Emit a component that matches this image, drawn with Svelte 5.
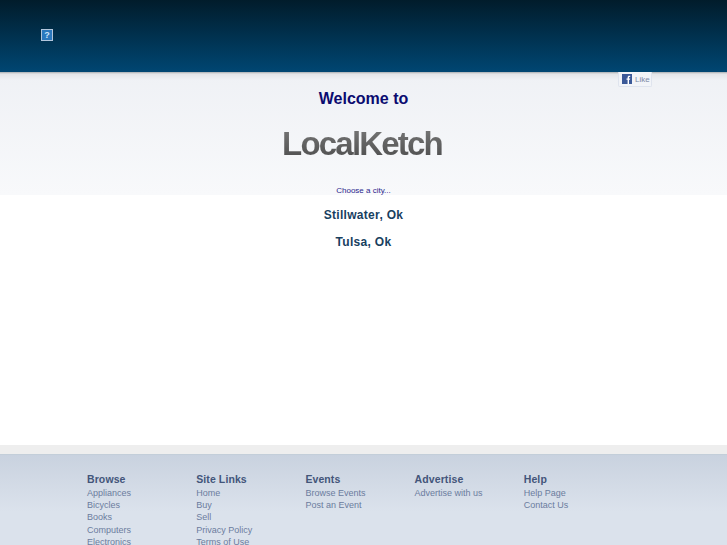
<script>
  const cities = ['Stillwater, Ok', 'Tulsa, Ok'];

  const columns = [
    { title: 'Browse', links: ['Appliances', 'Bicycles', 'Books', 'Computers', 'Electronics'] },
    { title: 'Site Links', links: ['Home', 'Buy', 'Sell', 'Privacy Policy', 'Terms of Use'] },
    { title: 'Events', links: ['Browse Events', 'Post an Event'] },
    { title: 'Advertise', links: ['Advertise with us'] },
    { title: 'Help', links: ['Help Page', 'Contact Us'] },
  ];
</script>

<div class="page">
  <header>
    <div class="missing" aria-label="logo">
      <span>?</span>
    </div>
  </header>

  <section class="welcome">
    <div class="like">
      <svg width="10" height="10" viewBox="0 0 10 10">
        <rect width="10" height="10" fill="#3b5998" />
        <path d="M5.6 10V5.8H4.5V4.4h1.1V3.4c0-1.1.6-1.7 1.7-1.7h.9v1.4h-.6c-.4 0-.6.2-.6.5v.8h1.2l-.2 1.4h-1V10z" fill="#fff" />
      </svg>
      <span>Like</span>
    </div>
    <h1>Welcome to</h1>
    <div class="logo">LocalKetch</div>
    <p>Choose a city...</p>
  </section>

  <main>
    {#each cities as city}
      <a href="#top">{city}</a>
    {/each}
  </main>

  <div class="band"></div>

  <footer>
    {#each columns as col}
      <div class="col">
        <h3>{col.title}</h3>
        {#each col.links as link}
          <a href="#top">{link}</a>
        {/each}
      </div>
    {/each}
  </footer>
</div>

<style>
  :global(body) {
    margin: 0;
    font-family: "Liberation Sans", Arial, sans-serif;
    background: #fff;
  }
  .page {
    height: 100vh;
    overflow: hidden;
    display: flex;
    flex-direction: column;
  }
  header {
    height: 72px;
    flex: none;
    background: linear-gradient(#011c2b, #004672);
    display: flex;
    align-items: center;
    padding: 0 0 2px 41px;
    box-sizing: border-box;
  }
  .missing {
    width: 12px;
    height: 12px;
    box-sizing: border-box;
    border: 1px solid #b3c6dc;
    background: #2b78bd;
    color: #cfe6fa;
    font-size: 9px;
    line-height: 10px;
    text-align: center;
    font-weight: bold;
  }
  .welcome {
    height: 123px;
    flex: none;
    box-sizing: border-box;
    background:
      linear-gradient(#a9adb0, #e3e5e8 2px, #eff1f5 8px, rgba(239, 241, 245, 0) 9px),
      linear-gradient(#eff1f5, #f8f9fb);
    text-align: center;
    position: relative;
    padding-top: 17px;
  }
  .like {
    position: absolute;
    top: 0;
    left: 618px;
    width: 34px;
    height: 15px;
    box-sizing: border-box;
    background: #f2f4f8;
    border: 1px solid #dfe4ee;
    border-top: none;
    border-radius: 0 0 2px 2px;
    display: flex;
    align-items: center;
    gap: 3px;
    padding-left: 3px;
    font-size: 8px;
    color: #7a87a6;
  }
  h1 {
    margin: 0;
    font-size: 16px;
    line-height: 20px;
    font-weight: bold;
    color: #0b0b70;
  }
  .logo {
    margin-top: 16px;
    padding-right: 3px;
    font-size: 33px;
    line-height: 38px;
    font-weight: bold;
    letter-spacing: -1.8px;
    background: linear-gradient(#7a7a7a, #4a4a4a);
    -webkit-background-clip: text;
    background-clip: text;
    color: transparent;
  }
  p {
    margin: 22px 0 0;
    font-size: 8px;
    line-height: 12px;
    color: #2b1e8c;
  }
  main {
    height: 250px;
    flex: none;
    padding-top: 12px;
    box-sizing: border-box;
    display: flex;
    flex-direction: column;
    align-items: center;
    gap: 11px;
  }
  main a {
    font-size: 12px;
    line-height: 16px;
    font-weight: bold;
    letter-spacing: 0.3px;
    color: #17405f;
    text-decoration: none;
  }
  .band {
    height: 9px;
    flex: none;
    background: #eeeeee;
  }
  footer {
    flex: 1;
    display: flex;
    padding: 17px 0 0 87px;
    background: linear-gradient(#c9d2df, #dbe2ec 60%);
    border-top: 1px solid #c3ced9;
  }
  .col {
    width: 109.2px;
    flex: none;
    display: flex;
    flex-direction: column;
  }
  h3 {
    margin: 0;
    font-size: 10.5px;
    line-height: 14.6px;
    font-weight: bold;
    letter-spacing: 0.1px;
    color: #43557a;
  }
  .col a {
    font-size: 9px;
    line-height: 12.4px;
    color: #6b7c9e;
    text-decoration: none;
  }
</style>
